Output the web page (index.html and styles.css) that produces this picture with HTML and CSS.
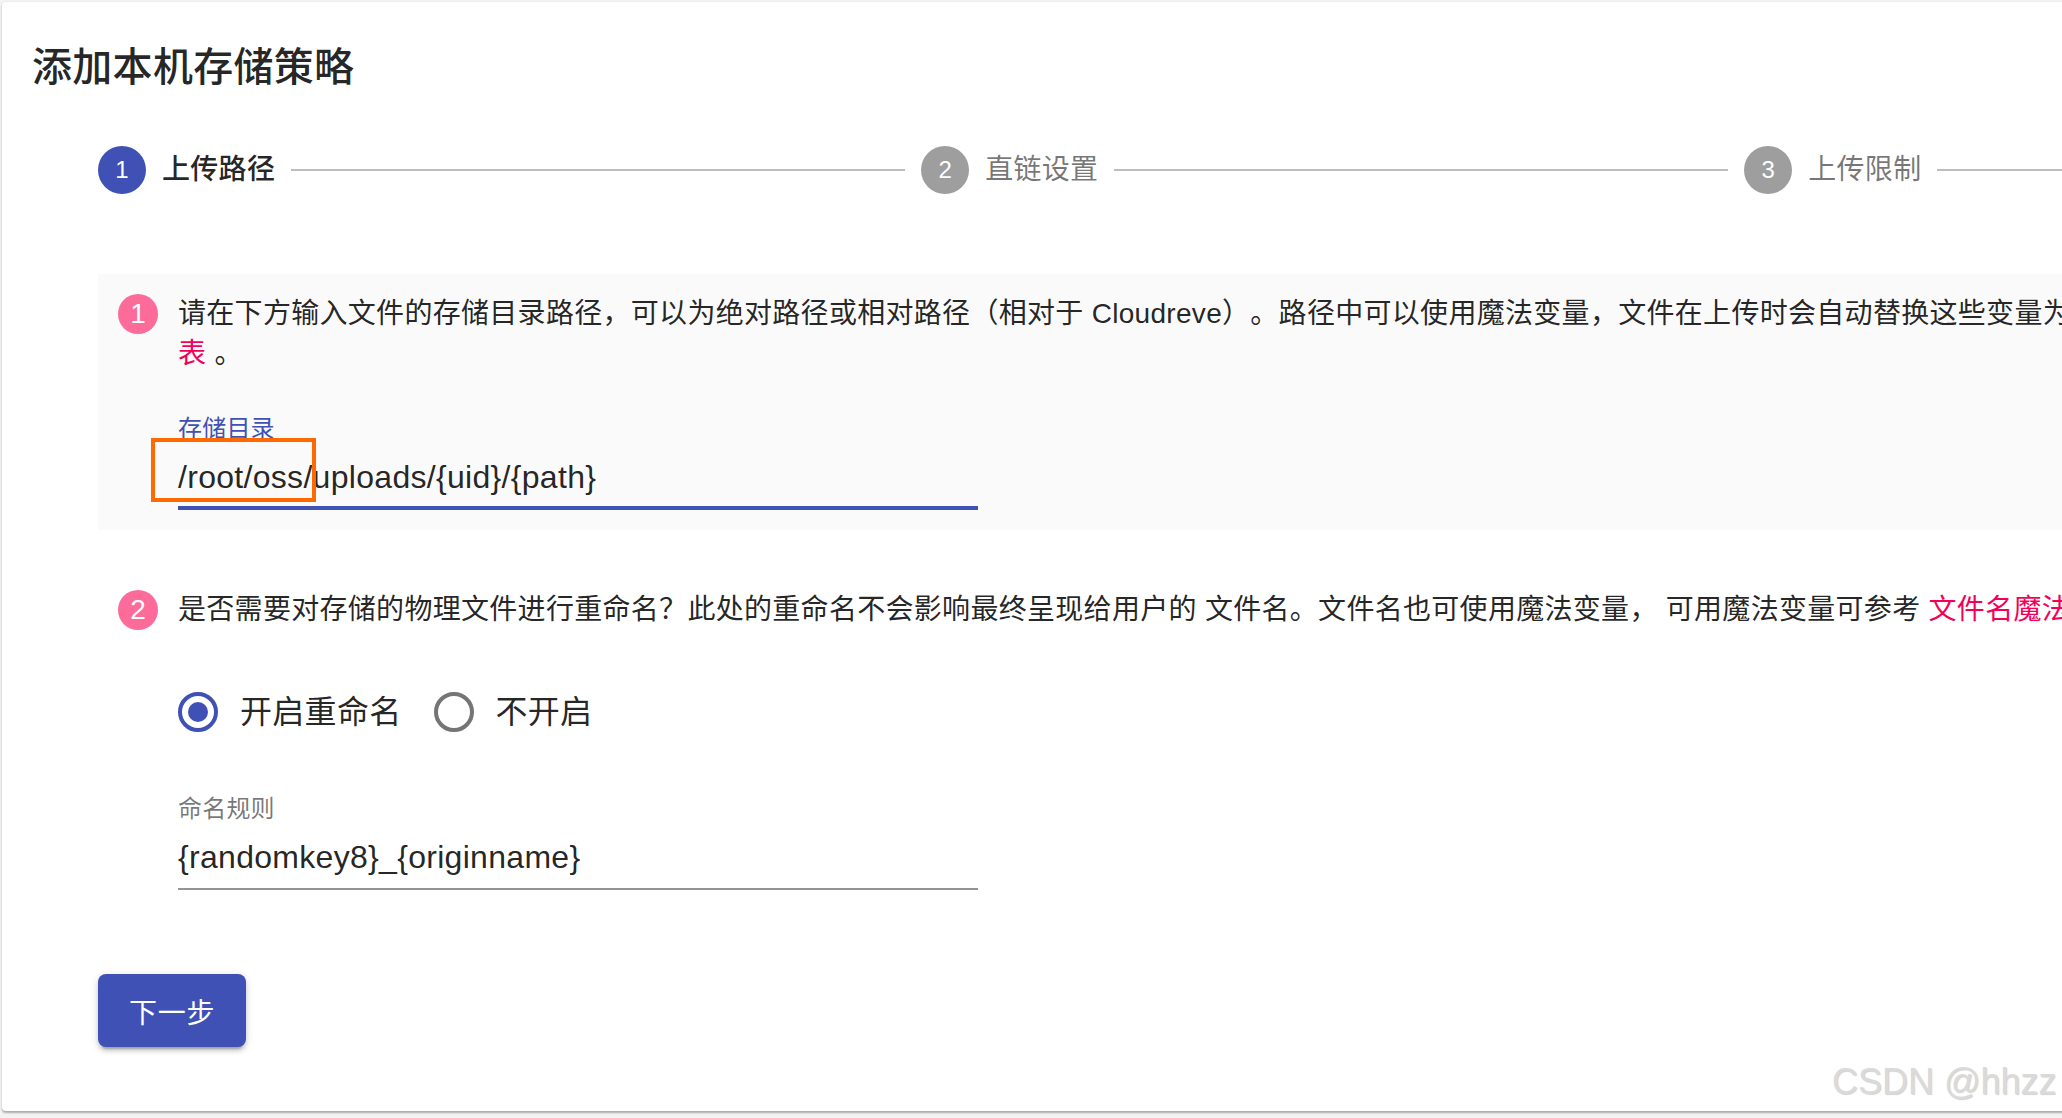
FILE: index.html
```html
<!DOCTYPE html>
<html lang="zh-CN">
<head>
<meta charset="utf-8">
<title>添加本机存储策略</title>
<link rel="stylesheet" href="styles.css">
</head>
<body>
<div class="card">
  <h1 class="title">添加本机存储策略</h1>

  <div class="stepper">
    <div class="step active">
      <span class="step-icon">1</span>
      <span class="step-label">上传路径</span>
    </div>
    <div class="connector"></div>
    <div class="step">
      <span class="step-icon">2</span>
      <span class="step-label">直链设置</span>
    </div>
    <div class="connector"></div>
    <div class="step">
      <span class="step-icon">3</span>
      <span class="step-label">上传限制</span>
    </div>
    <div class="connector"></div>
    <div class="step">
      <span class="step-icon">4</span>
      <span class="step-label">完成</span>
    </div>
  </div>

  <div class="content">
    <div class="substep focused">
      <div class="num-wrap"><span class="num">1</span></div>
      <div class="substep-body">
        <p class="desc">请在下方输入文件的存储目录路径，可以为绝对路径或相对路径（相对于 Cloudreve）。路径中可以使用魔法变量，文件在上传时会自动替换这些变量为相应值；可用魔法变量可参考 <a class="link">路径魔法变量列<br>表</a> 。</p>
        <div class="form">
          <div class="field">
            <label class="field-label focused-label">存储目录</label>
            <div class="input focused-input">/root/oss/uploads/{uid}/{path}</div>
            <span class="highlight"></span>
          </div>
        </div>
      </div>
    </div>

    <div class="substep">
      <div class="num-wrap"><span class="num">2</span></div>
      <div class="substep-body">
        <p class="desc nowrap">是否需要对存储的物理文件进行重命名？此处的重命名不会影响最终呈现给用户的 文件名。文件名也可使用魔法变量， 可用魔法变量可参考 <a class="link">文件名魔法变量列表</a> 。</p>
        <div class="form">
          <div class="radio-group">
            <div class="radio-option">
              <span class="radio checked"></span>
              <span class="radio-label">开启重命名</span>
            </div>
            <div class="radio-option">
              <span class="radio"></span>
              <span class="radio-label">不开启</span>
            </div>
          </div>
        </div>
        <div class="form">
          <div class="field">
            <label class="field-label">命名规则</label>
            <div class="input">{randomkey8}_{originname}</div>
          </div>
        </div>
      </div>
    </div>

    <div class="footer">
      <button class="btn">下一步</button>
    </div>
  </div>
</div>
<div class="watermark">CSDN @hhzz</div>
</body>
</html>
```
FILE: styles.css
```css
html, body {
  margin: 0;
  padding: 0;
}
body {
  background: #f3f3f3;
  width: 2062px;
  height: 1118px;
  overflow: hidden;
  position: relative;
  font-family: "Liberation Sans", "Noto Sans CJK SC", sans-serif;
  color: rgba(0, 0, 0, 0.87);
  text-spacing-trim: space-all;
}
.card {
  margin: 2px 0 0 2px;
  width: 2800px;
  background: #fff;
  border-radius: 4px;
  box-shadow: 0 2px 2px rgba(0, 0, 0, 0.28), 0 0 2px rgba(0, 0, 0, 0.08);
  padding: 33px 0 64px 30px;
  box-sizing: border-box;
}
.title {
  margin: 0;
  font-size: 40px;
  line-height: 64px;
  font-weight: 500;
  letter-spacing: 0.3px;
  color: rgba(0, 0, 0, 0.87);
}
.stepper {
  display: flex;
  align-items: center;
  width: 2622px;
  margin: 47px 0 0 50px;
}
.step {
  display: flex;
  align-items: center;
  padding: 0 16px;
  flex: none;
}
.step-icon {
  width: 48px;
  height: 48px;
  border-radius: 50%;
  background: #9e9e9e;
  color: #fff;
  font-size: 24px;
  display: flex;
  align-items: center;
  justify-content: center;
}
.step.active .step-icon {
  background: #3f51b5;
}
.step-label {
  margin-left: 16px;
  font-size: 28px;
  line-height: 40px;
  letter-spacing: 0.3px;
  color: rgba(0, 0, 0, 0.54);
}
.step.active .step-label {
  color: rgba(0, 0, 0, 0.87);
  font-weight: 500;
}
.connector {
  flex: 1;
  height: 2px;
  background: #bdbdbd;
}
.content {
  padding: 80px 0 0 66px;
}
.substep {
  display: flex;
  padding: 20px;
  margin-bottom: 40px;
}
.substep.focused {
  background: #fafafa;
}
.num-wrap {
  margin-right: 20px;
  flex: none;
}
.num {
  display: flex;
  width: 40px;
  height: 40px;
  border-radius: 50%;
  background: #fd6b9a;
  color: #fff;
  font-size: 28px;
  align-items: center;
  justify-content: center;
}
.substep-body {
  flex: 1;
}
.desc {
  margin: 0;
  font-size: 28px;
  line-height: 40px;
  letter-spacing: 0.3px;
}
.nowrap {
  white-space: nowrap;
}
.link {
  color: #f50057;
}
.form {
  margin-top: 40px;
}
.field {
  position: relative;
  width: 800px;
}
.field-label {
  display: block;
  box-sizing: border-box;
  height: 32px;
  padding-top: 3px;
  font-size: 24px;
  line-height: 24px;
  letter-spacing: 0.2px;
  color: rgba(0, 0, 0, 0.54);
}
.field-label.focused-label {
  color: #3f51b5;
}
.input {
  padding: 12px 0 14px;
  font-size: 32px;
  line-height: 38px;
  letter-spacing: 0.3px;
  color: rgba(0, 0, 0, 0.87);
  box-shadow: inset 0 -2px 0 rgba(0, 0, 0, 0.42);
}
.input.focused-input {
  box-shadow: inset 0 -4px 0 #3f51b5;
}
.highlight {
  position: absolute;
  left: -27px;
  top: 24px;
  width: 165px;
  height: 64px;
  box-sizing: border-box;
  border: 4px solid #ff6a00;
}
.radio-group {
  display: flex;
  align-items: center;
  gap: 32px;
  height: 84px;
}
.radio-option {
  display: flex;
  align-items: center;
}
.radio {
  width: 40px;
  height: 40px;
  box-sizing: border-box;
  border-radius: 50%;
  border: 4px solid #757575;
  margin-right: 22px;
  display: flex;
  align-items: center;
  justify-content: center;
}
.radio.checked {
  border-color: #3f51b5;
}
.radio.checked::after {
  content: "";
  width: 20px;
  height: 20px;
  border-radius: 50%;
  background: #3f51b5;
}
.radio-label {
  font-size: 32px;
  line-height: 48px;
  letter-spacing: 0.3px;
  color: rgba(0, 0, 0, 0.87);
}
.footer {
  padding-top: 24px;
}
.btn {
  display: block;
  height: 73px;
  padding: 0 31px;
  border: none;
  border-radius: 8px;
  background: #3f51b5;
  color: #fff;
  font-family: "Liberation Sans", "Noto Sans CJK SC", sans-serif;
  font-size: 28px;
  font-weight: 400;
  letter-spacing: 0.8px;
  box-shadow: 0 6px 2px -4px rgba(0, 0, 0, 0.2), 0 4px 4px 0 rgba(0, 0, 0, 0.14), 0 2px 10px 0 rgba(0, 0, 0, 0.12);
}
.watermark {
  position: absolute;
  left: 1832px;
  top: 1064px;
  font-family: "Liberation Sans", sans-serif;
  font-size: 36px;
  line-height: 36px;
  color: #dadada;
  text-shadow: 1px 1px 1px rgba(0, 0, 0, 0.18);
  white-space: nowrap;
}
```
